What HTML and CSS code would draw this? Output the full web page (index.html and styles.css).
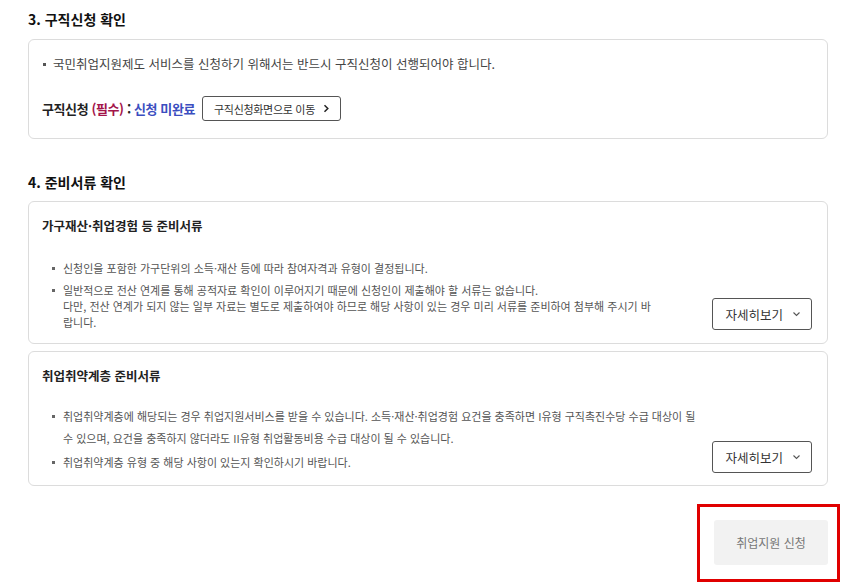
FILE: index.html
```html
<!DOCTYPE html>
<html lang="ko">
<head>
<meta charset="utf-8">
<title>국민취업지원제도</title>
<link rel="stylesheet" href="styles.css">
</head>
<body>
<div class="page">
  <h2 class="sec-title">3. 구직신청 확인</h2>
  <div class="card card-apply">
    <ul class="dot-list">
      <li>국민취업지원제도 서비스를 신청하기 위해서는 반드시 구직신청이 선행되어야 합니다.</li>
    </ul>
    <div class="status-row">
      <span class="status-label">구직신청 <em class="req">(필수)</em> : <span class="state">신청 미완료</span></span>
      <button class="btn-link" type="button">구직신청화면으로 이동
        <svg class="chev-r" width="8" height="9" viewBox="0 0 8 9"><path d="M2.5 1.2 L5.8 4.5 L2.5 7.8" fill="none" stroke="#222" stroke-width="1.5"/></svg>
      </button>
    </div>
  </div>

  <h2 class="sec-title sec-4">4. 준비서류 확인</h2>
  <div class="card card-doc">
    <h3 class="card-title">가구재산·취업경험 등 준비서류</h3>
    <div class="card-body">
      <ul class="sq-list tight">
        <li>신청인을 포함한 가구단위의 소득·재산 등에 따라 참여자격과 유형이 결정됩니다.</li>
        <li>일반적으로 전산 연계를 통해 공적자료 확인이 이루어지기 때문에 신청인이 제출해야 할 서류는 없습니다.<br>다만, 전산 연계가 되지 않는 일부 자료는 별도로 제출하여야 하므로 해당 사항이 있는 경우 미리 서류를 준비하여 첨부해 주시기 바<br>랍니다.</li>
      </ul>
      <button class="btn-more" type="button">자세히보기
        <svg width="9" height="6" viewBox="0 0 9 6"><path d="M1.5 1.5 L4.5 4.5 L7.5 1.5" fill="none" stroke="#555" stroke-width="1.1"/></svg>
      </button>
    </div>
  </div>
  <div class="card card-doc">
    <h3 class="card-title">취업취약계층 준비서류</h3>
    <div class="card-body body-2">
      <ul class="sq-list loose">
        <li>취업취약계층에 해당되는 경우 취업지원서비스를 받을 수 있습니다. 소득·재산·취업경험 요건을 충족하면 I유형 구직촉진수당 수급 대상이 될<br>수 있으며, 요건을 충족하지 않더라도 II유형 취업활동비용 수급 대상이 될 수 있습니다.</li>
        <li>취업취약계층 유형 중 해당 사항이 있는지 확인하시기 바랍니다.</li>
      </ul>
      <button class="btn-more" type="button">자세히보기
        <svg width="9" height="6" viewBox="0 0 9 6"><path d="M1.5 1.5 L4.5 4.5 L7.5 1.5" fill="none" stroke="#555" stroke-width="1.1"/></svg>
      </button>
    </div>
  </div>

  <div class="actions">
    <div class="highlight">
      <button class="btn-submit" type="button" disabled>취업지원 신청</button>
    </div>
  </div>
</div>
</body>
</html>
```
FILE: styles.css
```css
* { box-sizing: border-box; }
html, body { margin: 0; padding: 0; background: #fff; }
body {
  font-family: "Noto Sans CJK KR", "Noto Sans", sans-serif;
  color: #333;
  width: 855px;
  height: 585px;
  overflow: hidden;
}
.page {
  width: 800px;
  margin-left: 28px;
  padding-top: 9px;
}
.sec-title {
  margin: 0;
  font-size: 14px;
  line-height: 20px;
  font-weight: 700;
  color: #111;
}
.sec-4 { margin-top: 33px; }
.card {
  border: 1px solid #dcdcdc;
  border-radius: 6px;
  background: #fff;
}
.card-apply {
  margin-top: 10px;
  padding: 15px 14px 17px 13px;
}
.dot-list {
  list-style: none;
  margin: 0;
  padding: 0;
  font-size: 12.5px;
  line-height: 18px;
  color: #444;
}
.dot-list li {
  position: relative;
  padding-left: 11px;
}
.dot-list li::before {
  content: "";
  position: absolute;
  left: 1px;
  top: 8px;
  width: 3px;
  height: 3px;
  background: #555;
}
.status-row {
  display: flex;
  align-items: center;
  gap: 7px;
  margin-top: 23px;
}
.status-label {
  font-size: 13px;
  font-weight: 700;
  color: #222;
  letter-spacing: -0.4px;
}
.req { font-style: normal; color: #a3154a; }
.state { color: #3b4ec0; }
.btn-link {
  display: inline-flex;
  align-items: center;
  gap: 7px;
  height: 25px;
  padding: 0 10px 0 11px;
  border: 1px solid #555;
  border-radius: 3px;
  background: #fff;
  font-family: inherit;
  font-size: 11px;
  color: #333;
  letter-spacing: -0.3px;
}
.card-doc {
  margin-top: 9px;
  padding: 14px 14px 13px 13px;
}
.card-doc + .card-doc { margin-top: 7px; padding-bottom: 12px; }
.card-title {
  margin: 0;
  font-size: 12.5px;
  line-height: 20px;
  font-weight: 700;
  color: #222;
}
.card-body {
  display: flex;
  justify-content: space-between;
  align-items: flex-end;
  margin-top: 24px;
}
.body-2 { margin-top: 19px; }
.sq-list {
  list-style: none;
  margin: 0;
  padding: 0 0 0 8px;
  font-size: 11px;
  color: #555;
}
.sq-list li {
  position: relative;
  padding-left: 13px;
}
.sq-list li::before {
  content: "";
  position: absolute;
  left: 2px;
  width: 3px;
  height: 3px;
  background: #666;
}
.tight li { line-height: 16px; }
.tight li + li { margin-top: 6px; }
.tight li::before { top: 7px; }
.loose li { line-height: 22px; }
.loose li + li { margin-top: 2px; }
.loose li::before { top: 10px; }
.btn-more {
  flex: none;
  display: inline-flex;
  align-items: center;
  gap: 9px;
  height: 32px;
  margin-right: 1px;
  padding: 0 10px 0 12px;
  border: 1px solid #555;
  border-radius: 3px;
  background: #fff;
  font-family: inherit;
  font-size: 12.5px;
  color: #333;
}
.actions {
  display: flex;
  justify-content: flex-end;
  margin-top: 18px;
  margin-right: -12px;
}
.highlight {
  border: 3px solid #e00000;
  padding: 13px 9px 14px 14px;
}
.btn-submit {
  width: 114px;
  height: 45px;
  border: 0;
  border-radius: 3px;
  background: #f2f2f2;
  font-family: inherit;
  font-size: 12px;
  color: #777;
}
```
